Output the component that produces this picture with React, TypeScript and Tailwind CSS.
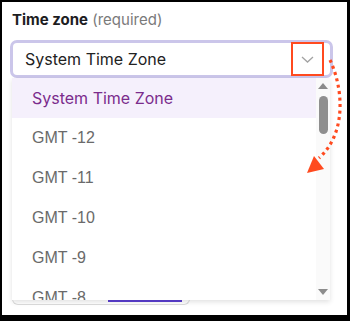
import React from 'react';

const options = ['System Time Zone', 'GMT -12', 'GMT -11', 'GMT -10', 'GMT -9', 'GMT -8'];

const TimeZoneSelect: React.FC = () => {
  return (
    <div className="w-[350px] h-[321px] bg-black pt-[2px] pl-[2px] pr-[3px] pb-[6px]">
      <div className="relative h-full bg-white pt-[8px] pl-[8px] font-['Inter',sans-serif]">
        {/* Label */}
        <div className="pl-[2px] text-[15px] leading-[20px]">
          <span className="font-bold text-[#1d1d1f]">Time zone</span>{' '}
          <span className="text-[#7a7a7a]">(required)</span>
        </div>

        {/* Select box */}
        <div className="mt-[10px] w-[323px] h-[38px] border-[3px] border-[#cbc6ea] rounded-[7px] flex items-center justify-between pl-[12px]">
          <span className="text-[16px] text-[#222]">System Time Zone</span>
          <div className="w-[34px] h-full flex items-center justify-center mr-[6px]">
            <svg width="13" height="7" viewBox="0 0 13 7" fill="none">
              <path d="M1 1l5.5 5L12 1" stroke="#a3a3a3" strokeWidth="1.3" />
            </svg>
          </div>
        </div>

        {/* Content underneath the menu */}
        <div className="mt-[156px] ml-[2px] w-[178px] h-[71px] border border-t-0 border-[#dcdcdc] rounded-b-[6px] flex items-end">
          <div className="ml-[95px] mb-[2px] w-[74px] h-[2px] bg-[#5a3fd1]" />
        </div>

        {/* Dropdown menu */}
        <div className="absolute left-[10px] top-[76px] w-[318px] h-[222px] bg-white shadow-[0_2px_5px_rgba(0,0,0,0.12)] flex overflow-hidden">
          <ul className="flex-1">
            {options.map((opt, i) => (
              <li
                key={opt}
                className={`h-[40px] flex items-center pl-[20px] text-[16px] ${
                  i === 0 ? 'bg-[#f5f0fc] text-[#7b2c8c]' : 'text-[#6a6a6a] font-["Liberation_Sans",sans-serif]'
                }`}
              >
                {opt}
              </li>
            ))}
          </ul>
          {/* Scrollbar */}
          <div className="w-[14px] bg-[#fafafa] flex flex-col items-center">
            <div className="mt-[5px] w-0 h-0 border-l-[5px] border-r-[5px] border-b-[6px] border-l-transparent border-r-transparent border-b-[#8c8c8c]" />
            <div className="mt-[7px] w-[9px] h-[38px] rounded-full bg-[#8f8f8f]" />
            <div className="mt-auto mb-[5px] w-0 h-0 border-l-[5px] border-r-[5px] border-t-[6px] border-l-transparent border-r-transparent border-t-[#8c8c8c]" />
          </div>
        </div>

        {/* Annotation: red box around chevron */}
        <div className="absolute left-[289px] top-[40px] w-[33px] h-[34px] border-2 border-[#ff4a1f]" />

        {/* Annotation: dotted arrow */}
        <svg className="absolute inset-0 pointer-events-none" width="345" height="313" viewBox="0 0 345 313">
          <path
            d="M328 58 C342 88, 344 132, 317 156"
            fill="none"
            stroke="#ff4a1f"
            strokeWidth="3.2"
            strokeDasharray="3 3.5"
          />
          <polygon points="312,154 322,167 305,171" fill="#ff4a1f" />
        </svg>
      </div>
    </div>
  );
};

export default function App() {
  return <TimeZoneSelect />;
}
